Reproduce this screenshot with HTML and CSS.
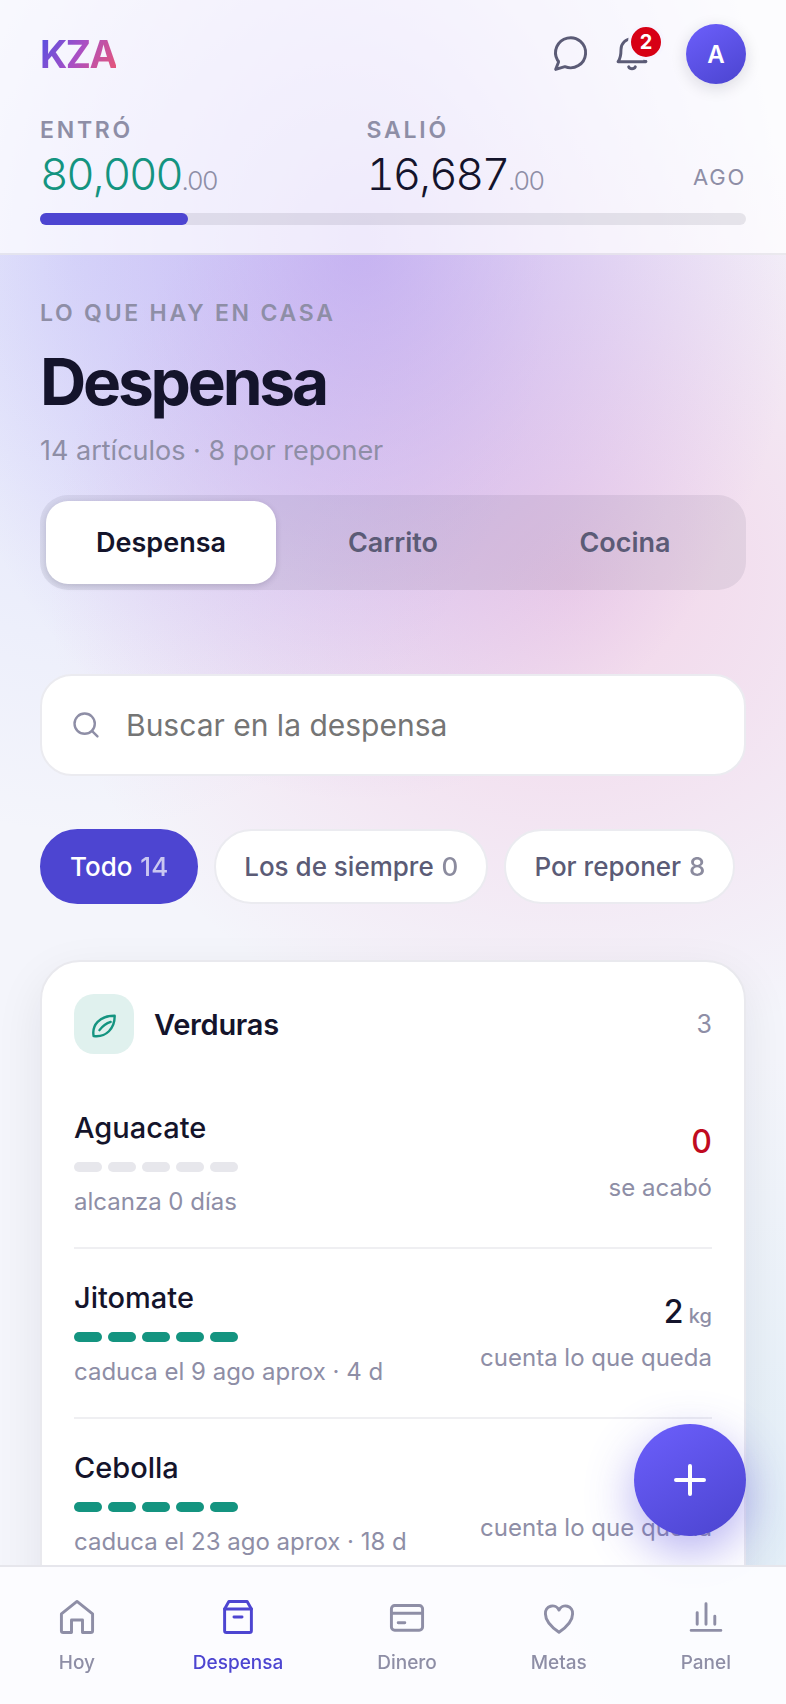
FILE: index.html
```html
<!DOCTYPE html>
<html lang="es">
<head>
	<meta charset="UTF-8" />
	<meta name="viewport" content="width=device-width, initial-scale=1.0" />
	<title>KZA · Despensa</title>
	<link rel="stylesheet" href="styles.css">
</head>
<body>
	<div class="app">
		<header class="top">
			<div class="top-bar">
				<a href="#hoy" class="logo">KZA</a>
				<div class="top-actions">
					<button class="icon-btn" aria-label="Mensajes">
						<svg class="icon" viewBox="0 0 24 24"><path d="M9.2 18.9 4.2 20.4 5.6 16.8Q6 16 5.2 15.4A8.2 8.2 0 1 1 9.2 18.9z"/></svg>
					</button>
					<button class="icon-btn" aria-label="Avisos">
						<svg class="icon" viewBox="0 0 24 24"><path d="M4.4 16.2C5.8 14.4 6 13 6 9.6a6 6 0 0 1 12 0c0 3.4.2 4.8 1.6 6.6z"/><path d="M10.2 19a1.9 1.5 0 0 0 3.6 0"/></svg>
						<span class="badge">2</span>
					</button>
					<button class="avatar" aria-label="Cuenta">A</button>
				</div>
			</div>
			<div class="balance">
				<div>
					<div class="label">Entró</div>
					<div class="amount amount-in">80<span>,</span>000<small>.00</small></div>
				</div>
				<div>
					<div class="label">Salió</div>
					<div class="amount">16<span>,</span>687<small>.00</small></div>
				</div>
				<div class="month">Ago</div>
			</div>
			<div class="progress"><div class="progress-fill" style="width: 20.9%"></div></div>
		</header>

		<main class="content">
			<div class="label">Lo que hay en casa</div>
			<h1>Despensa</h1>
			<p class="summary">14 artículos · 8 por reponer</p>

			<div class="tabs">
				<button class="tab active">Despensa</button>
				<button class="tab">Carrito</button>
				<button class="tab">Cocina</button>
			</div>

			<label class="search">
				<svg class="icon-sm" viewBox="0 0 24 24"><circle cx="11" cy="11" r="7.6"/><path d="M16.6 16.6 20.6 20.6"/></svg>
				<input type="search" placeholder="Buscar en la despensa" aria-label="Buscar en la despensa">
			</label>

			<div class="chips">
				<button class="chip active">Todo <span>14</span></button>
				<button class="chip">Los de siempre <span>0</span></button>
				<button class="chip">Por reponer <span>8</span></button>
			</div>

			<section class="card">
				<div class="card-head">
					<div class="tile">
						<svg class="icon-sm" viewBox="0 0 24 24"><path d="M4.2 21C2.8 13 8.4 5.8 20 5.8 20.2 15.4 13.6 22.2 4.2 21z"/><path d="M8.6 16.6c2.4-3.2 4.6-5 8.4-6.2"/></svg>
					</div>
					<h2>Verduras</h2>
					<span class="count">3</span>
				</div>
				<ul class="items">
					<li class="item">
						<div>
							<div class="item-name">Aguacate</div>
							<div class="level"><i></i><i></i><i></i><i></i><i></i></div>
							<div class="note">alcanza 0 días</div>
						</div>
						<div class="item-side">
							<div class="qty out">0</div>
							<div class="note">se acabó</div>
						</div>
					</li>
					<li class="item">
						<div>
							<div class="item-name">Jitomate</div>
							<div class="level full"><i></i><i></i><i></i><i></i><i></i></div>
							<div class="note">caduca el 9 ago aprox · 4 d</div>
						</div>
						<div class="item-side">
							<div class="qty">2<small> kg</small></div>
							<div class="note">cuenta lo que queda</div>
						</div>
					</li>
					<li class="item">
						<div>
							<div class="item-name">Cebolla</div>
							<div class="level full"><i></i><i></i><i></i><i></i><i></i></div>
							<div class="note">caduca el 23 ago aprox · 18 d</div>
						</div>
						<div class="item-side">
							<div class="qty">&nbsp;</div>
							<div class="note">cuenta lo que queda</div>
						</div>
					</li>
				</ul>
			</section>
		</main>

		<button class="fab" aria-label="Agregar">
			<svg viewBox="0 0 24 24"><path d="M12 5v14M5 12h14"/></svg>
		</button>

		<nav class="nav">
			<a href="#hoy">
				<svg class="icon" viewBox="0 0 24 24"><path d="M3.5 10.3 12 3.5l8.5 6.8v9.2a1 1 0 0 1-1 1H15v-6.9H9v6.9H4.5a1 1 0 0 1-1-1z"/></svg>
				Hoy
			</a>
			<a href="#despensa" class="active">
				<svg class="icon" viewBox="0 0 24 24"><path d="M4.7 7.6 7 3.5h10l2.3 4.1v11.9a1 1 0 0 1-1 1H5.7a1 1 0 0 1-1-1z"/><path d="M4.7 7.6h14.6M9.8 12h4.4"/></svg>
				Despensa
			</a>
			<a href="#dinero">
				<svg class="icon" viewBox="0 0 24 24"><rect x="3.5" y="5.7" width="17" height="13.5" rx="1.8"/><path d="M3.5 10h17M7.2 15.1h3.6"/></svg>
				Dinero
			</a>
			<a href="#metas">
				<svg class="icon" viewBox="0 0 24 24"><path d="M12 20.3C8.4 17.8 4.6 14 4.6 10.3A3.9 3.9 0 0 1 12 8.2a3.9 3.9 0 0 1 7.4 2.1c0 3.7-3.8 7.5-7.4 10z"/></svg>
				Metas
			</a>
			<a href="#panel">
				<svg class="icon" viewBox="0 0 24 24"><path d="M3.9 19.3h16.2M7.2 16V9.6M12 16V4.8M16.8 16v-4.4"/></svg>
				Panel
			</a>
		</nav>
	</div>
</body>
</html>
```

FILE: styles.css
```css
* {
	box-sizing: border-box;
}
body {
	margin: 0;
	font-family: Inter, "Liberation Sans", sans-serif;
	color: #14142b;
	background:
		radial-gradient(ellipse 56% 33% at 46% 14%, rgba(160, 126, 236, 0.5), rgba(160, 126, 236, 0)),
		radial-gradient(ellipse 66% 28% at 72% 34%, rgba(236, 136, 190, 0.3), rgba(236, 136, 190, 0)),
		radial-gradient(ellipse 60% 34% at 10% 15%, rgba(150, 165, 255, 0.22), rgba(150, 165, 255, 0)),
		radial-gradient(ellipse 50% 28% at 100% 90%, rgba(190, 225, 240, 0.32), rgba(190, 225, 240, 0)),
		#f4f5fb;
}
button {
	font: inherit;
	color: inherit;
	border: none;
	background: none;
	padding: 0;
	cursor: pointer;
}
a {
	color: inherit;
	text-decoration: none;
}
svg {
	display: block;
	fill: none;
	stroke: currentColor;
	stroke-linecap: round;
	stroke-linejoin: round;
}
.icon {
	width: 44px;
	height: 44px;
	stroke-width: 1.6;
}
.icon-sm {
	width: 32px;
	height: 32px;
	stroke-width: 1.8;
	flex: none;
}
.app {
	height: 100vh;
	display: flex;
	flex-direction: column;
}

/* Header */
.top {
	padding: 24px 40px 28px;
	background: rgba(255, 255, 255, 0.72);
	border-bottom: 2px solid rgba(20, 20, 43, 0.07);
}
.top-bar {
	display: flex;
	align-items: center;
	justify-content: space-between;
}
.logo {
	font-size: 38px;
	font-weight: 700;
	line-height: 60px;
	letter-spacing: -0.04em;
	background: linear-gradient(120deg, #5b50e0 10%, #a94fc4 50%, #f0566b);
	background-clip: text;
	-webkit-background-clip: text;
	color: transparent;
}
.top-actions {
	display: flex;
	align-items: center;
	gap: 18px;
	color: #5b5b76;
}
.icon-btn {
	position: relative;
}
.badge {
	position: absolute;
	top: -8px;
	right: -10px;
	min-width: 36px;
	height: 36px;
	border: 3px solid #f7f5ff;
	border-radius: 18px;
	background: #d70015;
	color: #fff;
	font-size: 20px;
	font-weight: 700;
	line-height: 30px;
	text-align: center;
}
.avatar {
	width: 60px;
	height: 60px;
	margin-left: 14px;
	border-radius: 50%;
	background: linear-gradient(150deg, #6c5ffc, #4b44cf);
	box-shadow: 0 4px 16px rgba(20, 20, 43, 0.14);
	color: #fff;
	font-size: 24px;
	font-weight: 600;
}
.label {
	font-size: 23px;
	font-weight: 600;
	line-height: 28px;
	letter-spacing: 0.12em;
	text-transform: uppercase;
	color: #8e8ea6;
}
.balance {
	display: grid;
	grid-template-columns: 1fr 1fr auto;
	align-items: end;
	margin-top: 32px;
}
.amount {
	font-size: 44px;
	font-weight: 300;
	line-height: 60px;
	letter-spacing: -0.05em;
	font-variant-numeric: tabular-nums;
}
.amount span {
	font-variant-numeric: normal;
}
.amount-in {
	color: #149480;
}
.amount small {
	font-size: 26px;
	letter-spacing: -1px;
	font-variant-numeric: normal;
	color: #8e8ea6;
}
.month {
	font-size: 22px;
	line-height: 68px;
	letter-spacing: 0.08em;
	text-transform: uppercase;
	color: #8e8ea6;
}
.progress {
	height: 12px;
	margin-top: 2px;
	border-radius: 6px;
	background: rgba(20, 20, 43, 0.09);
}
.progress-fill {
	height: 100%;
	border-radius: 6px;
	background: #4d45d1;
}

/* Content */
.content {
	flex: 1;
	min-height: 0;
	overflow-y: auto;
	scrollbar-width: none;
	padding: 44px 40px 0;
}
h1 {
	margin: 16px 0 0;
	font-size: 64px;
	font-weight: 700;
	line-height: 78px;
	letter-spacing: -0.05em;
}
.summary {
	margin: 12px 0 26px;
	font-size: 27px;
	line-height: 36px;
	color: #8e8ea6;
}
.tabs {
	display: grid;
	grid-template-columns: repeat(3, 1fr);
	gap: 2px;
	padding: 6px;
	border-radius: 28px;
	background: rgba(20, 20, 43, 0.07);
}
.tab {
	height: 83px;
	border-radius: 22px;
	font-size: 27px;
	font-weight: 600;
	color: #5b5b76;
}
.tab.active {
	background: #fff;
	color: #14142b;
	box-shadow: 0 2px 6px rgba(20, 20, 43, 0.16);
}
.search {
	display: flex;
	align-items: center;
	gap: 24px;
	height: 102px;
	margin-top: 84px;
	padding: 0 28px;
	border: 2px solid #ebebf0;
	border-radius: 32px;
	background: #fff;
	color: #8e8ea6;
}
.search input {
	flex: 1;
	min-width: 0;
	padding: 0;
	border: none;
	outline: none;
	background: none;
	font: inherit;
	font-size: 30px;
	color: #14142b;
}
.search input::placeholder {
	color: #757575;
}
.chips {
	display: flex;
	gap: 16px;
	margin-top: 53px;
}
.chip {
	height: 75px;
	padding: 0 28px;
	border: 2px solid #ebebf0;
	border-radius: 38px;
	background: #fff;
	color: #5b5b76;
	font-size: 26px;
	font-weight: 500;
	white-space: nowrap;
}
.chip span {
	margin-left: 1px;
	opacity: 0.7;
}
.chip.active {
	border-color: #4d45d1;
	background: #4d45d1;
	color: #fff;
}
.card {
	margin-top: 56px;
	padding: 32px;
	border: 2px solid #e9e9ee;
	border-radius: 40px;
	background: #fff;
	box-shadow: 0 16px 48px rgba(20, 20, 43, 0.08);
}
.card-head {
	display: flex;
	align-items: center;
	gap: 20px;
	margin-bottom: 25px;
}
.tile {
	display: grid;
	place-items: center;
	width: 60px;
	height: 60px;
	border-radius: 20px;
	background: #e0f1ee;
	color: #149480;
}
h2 {
	flex: 1;
	margin: 0;
	font-size: 29px;
	font-weight: 600;
	letter-spacing: -0.01em;
}
.count {
	font-size: 25px;
	color: #8e8ea6;
}
.items {
	margin: 0;
	padding: 0;
	list-style: none;
}
.item {
	display: flex;
	align-items: center;
	justify-content: space-between;
	height: 170px;
	border-bottom: 2px solid #efeff2;
}
.item:last-child {
	border-bottom-color: transparent;
}
.item-name {
	font-size: 29px;
	font-weight: 500;
	line-height: 40px;
}
.level {
	display: flex;
	gap: 6px;
	margin: 14px 0 14px;
}
.level i {
	width: 28px;
	height: 10px;
	border-radius: 5px;
	background: #e7e7ec;
}
.level.full i {
	background: #149480;
}
.note {
	font-size: 24px;
	line-height: 32px;
	color: #8e8ea6;
}
.item-side {
	text-align: right;
}
.qty {
	font-size: 32px;
	font-weight: 500;
	line-height: 40px;
	margin-bottom: 10px;
}
.qty small {
	font-size: 20px;
	line-height: 20px;
	color: #8e8ea6;
}
.qty.out {
	color: #c00a20;
}

/* Floating button */
.fab {
	position: fixed;
	right: 40px;
	bottom: 168px;
	display: grid;
	place-items: center;
	width: 112px;
	height: 112px;
	border-radius: 50%;
	background: linear-gradient(150deg, #6c5ffc, #4b44cf);
	box-shadow: 0 16px 48px rgba(91, 80, 224, 0.46);
	color: #fff;
}
.fab svg {
	width: 48px;
	height: 48px;
	stroke-width: 2;
}

/* Bottom nav */
.nav {
	position: relative;
	display: flex;
	justify-content: space-around;
	padding: 28px 8px 29px;
	border-top: 2px solid #e6e6ec;
	background: rgba(253, 253, 255, 0.9);
	color: #8e8ea6;
}
.nav a {
	display: flex;
	flex-direction: column;
	align-items: center;
	gap: 12px;
	min-width: 44px;
	font-size: 19px;
	font-weight: 500;
	line-height: 24px;
}
.nav a.active {
	color: #4d45d1;
}
```
